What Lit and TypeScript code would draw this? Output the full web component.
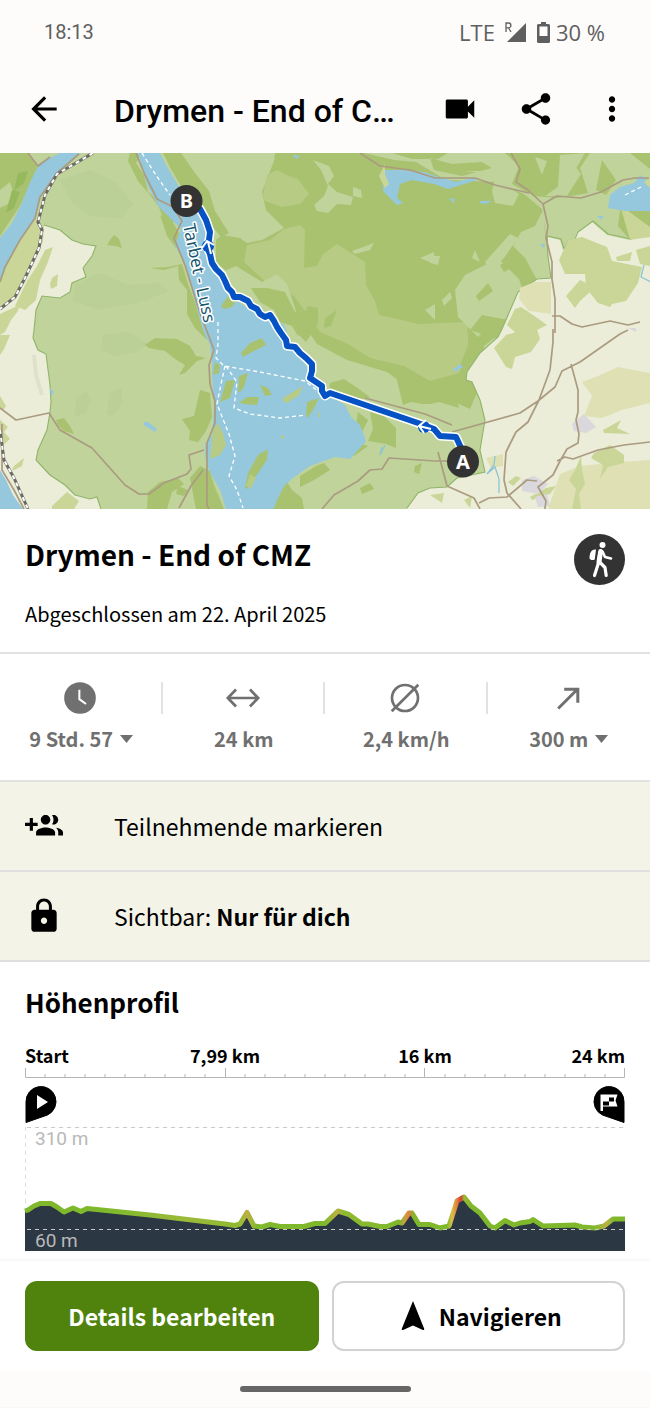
import { LitElement, html, css, svg } from "lit";
import { customElement, property } from "lit/decorators.js";

const icons: Record<string, unknown> = {
  back: svg`<path d="M20 11H7.83l5.59-5.59L12 4l-8 8 8 8 1.41-1.41L7.83 13H20z"/>`,
  video: svg`<path d="M17 10.5V7c0-.55-.45-1-1-1H4c-.55 0-1 .45-1 1v10c0 .55.45 1 1 1h12c.55 0 1-.45 1-1v-3.5l4 4v-11z"/>`,
  share: svg`<path d="M18 16.08c-.76 0-1.44.3-1.96.77L8.91 12.7c.05-.23.09-.46.09-.7s-.04-.47-.09-.7l7.05-4.11c.54.5 1.25.81 2.04.81 1.66 0 3-1.34 3-3s-1.34-3-3-3-3 1.34-3 3c0 .24.04.47.09.7L8.04 9.81C7.5 9.31 6.79 9 6 9c-1.66 0-3 1.34-3 3s1.34 3 3 3c.79 0 1.5-.31 2.04-.81l7.12 4.16c-.05.21-.08.43-.08.65 0 1.61 1.31 2.92 2.92 2.92s2.92-1.31 2.92-2.92-1.31-2.92-2.92-2.92z"/>`,
  more: svg`<path d="M12 8c1.1 0 2-.9 2-2s-.9-2-2-2-2 .9-2 2 .9 2 2 2zm0 2c-1.1 0-2 .9-2 2s.9 2 2 2 2-.9 2-2-.9-2-2-2zm0 6c-1.1 0-2 .9-2 2s.9 2 2 2 2-.9 2-2-.9-2-2-2z"/>`,
  groupAdd: svg`<path d="M8 10H5V7H3v3H0v2h3v3h2v-3h3v-2zm10 1c1.66 0 2.99-1.34 2.99-3S19.66 5 18 5c-.32 0-.63.05-.91.14.57.81.9 1.79.9 2.86s-.34 2.04-.9 2.86c.28.09.59.14.91.14zm-5 0c1.66 0 2.99-1.34 2.99-3S14.66 5 13 5c-1.66 0-3 1.34-3 3s1.34 3 3 3zm6.62 2.16c.83.73 1.38 1.66 1.38 2.84v2h3v-2c0-1.54-2.37-2.49-4.38-2.84zM13 13c-2 0-6 1-6 3v2h12v-2c0-2-4-3-6-3z"/>`,
  lock: svg`<path d="M18 8h-1V6c0-2.76-2.24-5-5-5S7 3.24 7 6v2H6c-1.1 0-2 .9-2 2v10c0 1.1.9 2 2 2h12c1.1 0 2-.9 2-2V10c0-1.1-.9-2-2-2zm-6 9c-1.1 0-2-.9-2-2s.9-2 2-2 2 .9 2 2-.9 2-2 2zm3.1-9H8.9V6c0-1.71 1.39-3.1 3.1-3.1 1.71 0 3.1 1.39 3.1 3.1v2z"/>`,
  clock: svg`<circle cx="12" cy="12" r="10"/><path d="M11.6 6.8v5.9l4.2 3.1" fill="none" stroke="#fff" stroke-width="1.3"/>`,
  distance: svg`<path d="M3 12h18M7.6 6.6 2.4 12l5.2 5.4M16.4 6.6 21.6 12l-5.2 5.4" fill="none" stroke="currentColor" stroke-width="1.7"/>`,
  average: svg`<circle cx="12" cy="12" r="8.2" fill="none" stroke="currentColor" stroke-width="1.7"/><path d="M3.6 20.4 20.4 3.6" stroke="currentColor" stroke-width="1.7"/>`,
  ascent: svg`<path d="M5.8 18.6 17.8 6.600M9.600 6.400h8.600v8.600" fill="none" stroke="currentColor" stroke-width="1.9"/>`,
  navigate: svg`<path d="M12 2 4.6 20.4c-.3.8.1 1.2.8.9L12 18.4l6.600 2.900c.7.3 1.100-.1.8-.9z"/>`,
};

const icon = (name: string, cls = "icon") =>
  html`<svg class=${cls} viewBox="0 0 24 24" fill="currentColor" aria-hidden="true">${icons[name]}</svg>`;

@customElement("status-bar")
class StatusBar extends LitElement {
  static styles = css`
    :host { display: flex; justify-content: space-between; align-items: center; height: 64px; padding: 0 45px 0 44px; color: #5f5f5f; font: 22px/28px "Open Sans", sans-serif; }
    .time { font: 20px/28px Roboto, sans-serif; }
    .right { display: flex; align-items: center; gap: 10px; }
    .signal { width: 22px; height: 22px; }
    .charge { display: flex; align-items: center; gap: 6px; }
    .battery { width: 13px; height: 21px; }
  `;
  render() {
    return html`
      <span class="time">18:13</span>
      <span class="right">
        <span>LTE</span>
        <svg class="signal" viewBox="0 0 22 22" fill="#5f5f5f">
          <path d="M21 2v19H2z"/>
          <path d="M1 11V2h2.500a2.300 2.300 0 0 1 0 4.800H1M3.600 7l2.400 4" fill="none" stroke="#5f5f5f" stroke-width="1.300"/>
        </svg>
        <span class="charge">
          <svg class="battery" viewBox="0 0 13 21" fill="#5f5f5f">
            <path fill-rule="evenodd" d="M4 0h5v2h2.500q1.500 0 1.500 1.500v16q0 1.500-1.500 1.500h-10Q0 21 0 19.500v-16Q0 2 1.500 2H4zM2.500 4.500V14h8V4.500z"/>
          </svg>
          <span>30 %</span>
        </span>
      </span>`;
  }
}

@customElement("app-bar")
class AppBar extends LitElement {
  @property() heading = "";
  static styles = css`
    :host { display: flex; align-items: center; height: 89px; padding: 0 19px 0 25px; box-sizing: border-box; }
    button { display: flex; padding: 0; border: 0; background: none; color: #000; }
    .icon { width: 38px; height: 38px; }
    h1 { flex: 1; min-width: 0; margin: 0 32px 0 51px; padding-top: 4px; overflow: hidden; text-overflow: ellipsis; white-space: nowrap; font: 500 32px/40px Roboto, sans-serif; }
    .actions { display: flex; gap: 38px; }
  `;
  render() {
    return html`
      <button aria-label="Zurück">${icon("back")}</button>
      <h1>${this.heading}</h1>
      <div class="actions">
        <button aria-label="Video">${icon("video")}</button>
        <button aria-label="Teilen">${icon("share")}</button>
        <button aria-label="Mehr">${icon("more")}</button>
      </div>`;
  }
}

const ROUTE =
  "M200 209L206 220 210 232 209 240 207 247 210 254 212 263 216 269 222 275 225 281 228 288 232 292 234 297 240 297 248 301 251 306 257 309 260 314 265 317 270 315 274 321 277 327 281 333 286 340 287 346 295 347 300 353 306 358 312 364 312 371 310 378 316 382 322 386 322 391 325 396 330 393 418 423 434 429 440 436 456 437 462 450";

@customElement("route-map")
class RouteMap extends LitElement {
  static styles = css`
    :host { display: block; }
    .map { display: block; width: 100%; }
    .road { fill: none; stroke: #ab9b80; stroke-width: 1.7; stroke-linejoin: round; }
    .rail { fill: none; stroke: #6b6b64; stroke-width: 3; }
    .ties { fill: none; stroke: #fff; stroke-width: 2; stroke-dasharray: 4 4; }
    .bound { fill: none; stroke: #8fb56a; stroke-width: 1.1; }
    .ferry { fill: none; stroke: #fff; stroke-width: 1.3; stroke-dasharray: 4 3; }
    .water { fill: #95c8dd; }
    .light { fill: #bfd39a; }
    .mid { fill: #a8c270; }
    .olive { fill: #b8cb85; }
    .khaki { fill: #c9d697; }
    .cream { fill: #ebedd8; }
    .tan { fill: #dfe1b5; }
    .town { fill: #dad8dc; }
    .pin { fill: #333; }
    .letter { font: 700 20px "Noto Sans", sans-serif; fill: #fff; text-anchor: middle; }
    .lake { font: 17px "Noto Sans", sans-serif; fill: #19566f; stroke: #fff; stroke-width: 3; paint-order: stroke; stroke-linejoin: round; }
    .halo { fill: none; stroke: #fff; stroke-width: 9; stroke-linejoin: round; stroke-linecap: round; }
    .route { fill: none; stroke: #0552c4; stroke-width: 6; stroke-linejoin: round; stroke-linecap: round; }
    .arrow { fill: none; stroke: #fff; stroke-width: 2; }
    .dot { fill: #0552c4; }
  `;
  render() {
    return html`
      <svg class="map" viewBox="0 153 650 356" role="img" aria-label="Karte der Tour">
        <rect class="light" x="0" y="153" width="650" height="356"/>
        <path fill="#bad096" d="M60 180l30-10 25 12 18 22-12 14-30-2-18-12zM75 285l25-12 28 12 30-2 10 8-30 12-40 6-25-8zM103 335l25-3 20 12-12 8-20 4-14-6zM76 398l10-6 5 8-6 14-10 2zM110 392l12-4 0 16-10 12-5-2z"/>

        <path class="mid" d="M0 153h28l10 13-3 9-7 14-8 17-20 30z"/>
        <path class="light" d="M28 153h24l-14 13zM0 190l10-8 3 10-5 12-8 4z"/>
        <path fill="#97b95d" d="M18 173l10-2-4 12-10 8zM12 190l8 2-6 16-8 5z"/>
        <path class="water" d="M60 153h20l-23 20-17 24-5 21-15 22-15 27-5 15v-44l12-15 10-20 6-16 7-15 5-9z"/>
        <path class="khaki" d="M35 219l7 9-1 17-16 33-10 19-15 12v-27l20-42z"/>
        <path class="cream" d="M44 225l16 5 12 10 11 4 13 2-4 10-9 12 3 9-14 6-2 9-10 6-18-2-6 14-2 20-1 8 5 12 8 4 4 31 1 17-1 10-3 18-9 20-2 10 14 15 15 10 10 10 15 4 7-2 4 12H0V309l18-16 16-30 9-22z"/>
        <path class="khaki" d="M45 250l8-3-5 15-8 18-4 20-11 10-10-4 12-25 10-15zM52 278l6-4-1 12-6 3-1-5zM0 314l15-7 5-4-2 8-7 9-6 12-5 3zM0 335h10l-6 14-4 6zM0 396l6 10-3 4-3-2zM0 420l8 7-4 5 6 7-8 7-2-10zM14 466l10-8-2 8-10 5zM52 506l15-14 12 9-5 8H52z"/>
        <path class="bound" d="M44 225l16 5 12 10 11 4 13 2-4 10-9 12 3 9-14 6-2 9-10 6-18-2-6 14-2 20-1 8 5 12 8 4 4 31 1 17-1 10-3 18-9 20-2 10 14 15 15 10 10 10 15 4 7-2 4 12"/>
        <path fill="none" stroke="#dfe2cb" stroke-width="4" d="M34 355l2 20 6 20"/>
        <path class="mid" d="M110 240l4-5 5 4 3 9-6-2-9-1zM56 420l8-2 6 8 4 8-10-3-6-6zM145 345l10-7 22 1 13 7 6 10 10 2-9 3-12 12-6 2 6-10-10-6-10-8-16-3zM200 390l10 3 2 24-6 14-8 11-9-2 1-9-8-12 12-3zM148 492l12-10 18-4 6 6-12 8-5 17h-20zM190 478l10-12 10 5 4 14 10 24h-28zM178 486l10 4-4 6-8-2z"/>

        <path class="mid" d="M275 153l-1 8-12 31 4 18 18 18-22 12-15 3-7-5-18-3-6 5v22l14 12 10 18 20 8 16 10 14 18 10 8 20 28 60 20 60 20 30 5 12-28 2-35 25-20 18-40 25-18 3-40-5-35-18-15-45-10-50-5-30-25z"/>
        <path class="mid" d="M130 153h12l-6 10 8 12 4 17 14 12 14 12-4 10 4 14-8-8-9-25-9-12-12-14-10-20zM163 153h18l14 20 14 18 6 20 14 22-8 4-16-20-12-14-8-10-14-24zM150 268l18-1 14-3 6 20 7 18 7 24 5 14-12-12-8-14 0-24-8-10-1-14-14 4zM160 215l14 9 10 18-8 6-9-12z"/>
        <path class="olive" d="M247 245l23-5 14-11 16-4 5 5-1 38 13-2 6-12 14-10 14 9 14 9 1 23 9 16 4 14 40 9 48-2 2 31-10 20-29 8-26-15-34-8-22-14-28-12-26-36-28-14-22-20zM277 170l14 7 7 2 11 15-9 10-18 3-17-6-2-6 4-20z"/>
        <path class="light" d="M222 272l14-6 26 16 15-8 10 10 10 30 20 30 30 16 40 12 30 22 25 2 30 14 12 10 2 14-2 36-20 6-20 8-35 14-18 11H268l14-29 23-15 25-10 15 2 16-15-18-30-13-12-18-16-10-18-18-20-20-18-25-20-12-20z"/>
        <path class="mid" d="M251 288l16 0 18 4 9 18 12 14-8 12-6-10-12-4-6-12-14-8zM300 320l8-14 10 2 0 16-12 18-8-8zM325 318l12-8-6 16-7 2zM395 372l16 8 22 4 22 10 4 14-20-6-8 2-8 0-12-2-8 3zM470 340l18-30 14-22 10-15 22-8 10 4-20 18-22 40-20 20-8 22 10 30-14-12-10-22zM330 383l14-4 12 8 14 10-12 3-14-6-15-2zM370 412l14 4 12 12 0 20-10-4-18-3 5-12zM358 412l10 8-6 12-6-8zM300 476l16-10 8-3 6 7-16 10-14 7zM278 485l8-5 6 10 10 8 2 11h-34zM360 488l10-5 4 6-12 5zM348 450l14-6 6 2-14 10zM415 466l7-3-3 11-5-2z"/>
        <path class="light" d="M313 160l16 6 5 10-6 8 9 8 16 5-2 8-14-1-9 9-11-2-3-6 10-9 4-10-7-16zM353 187l8 3 1 8-9-2zM352 251l22-8-4 7-15 4zM420 258l14-6v12zM425 310l10-6v16zM485 262l25-28 8 4-14 20-14 13zM430 256l10 0-2 9-8-2zM455 290l10-15 20-10 14-6 20 20 7 20-12 20-20 0-16 18-20-20zM475 250l5 12-8-4zM442 300l8-8 2 6-8 8z"/>
        <path class="mid" d="M476 296l12-13 5 8-14 10zM500 265l14-8 5 6-15 9zM470 330l12-15 30 6-14 18z"/>

        <path class="light" d="M364 153h286v85l-20 2-38-18-18 20-7 8-7-10-14-3-4-28-18-15-28-12-50-2-30-18-22-2z"/>
        <path class="light" d="M547 205l-3 20 4 32 3 22-14 1-12-22-12-12 8-14 14-6 6-12z"/>
        <path class="mid" d="M505 153h85l-10 15 8 25-30 5-24-2-22-12 7-18zM620 210h30v24l-20 6-12-14zM600 153h30l20 16v-16zM596 190l6-30 14 20-10 15zM430 158l22 6 30-2 10 6-30 8-28-6zM392 153l20 6 26 0 10-6z"/>
        <path class="light" d="M560 155l25-2-15 26-12 8zM535 157l12 4-5 14zM462 171l24 2v-2zM545 196l14-10 16-20 6 8-14 22zM495 178l24 16-6 12-18-3-3-12z"/>
        <path class="cream" d="M548 237l12 3 3 10 4-8 7-2 3-7 15-11 15 13 23 5 20-8v277H407l11-16 12-5 17-1 10-9 28-6-5-22 5-30-5-20-8-18-6-2 1-8 13-19 18-16 4-8 16-37 9-6 10-7 14-1-3-22z"/>
        <path class="bound" d="M407 508l11-15 12-5 17-1 10-9 28-6-5-22 5-30-5-20-8-18-6-2 1-8 13-19 18-16 4-8 16-37 9-6 10-7 14-1-3-22-1-20 14 3 3 10 4-8 7-2 3-7 15-11 15 13 23 5 20-8"/>
        <path class="khaki" d="M568 240l14-3 25 10 5 14 30 6-4 16-12 18-14 3-2 3-12-4-12-15-1-14-20 0-6-14 6-13zM566 296l14-16 8 4 1 9-9 8-5 7zM616 257l16-5-2 9-13 0zM636 250l14-4v20l-10-2zM494 348l12-13 30-9 4 13-9 13-16 5-3 12-6-2-10-16zM507 325l8-16 6-2 12 8 14 10-10 5-20 4zM620 205l30 22v10l-20 3z"/>
        <path class="tan" d="M520 288l14-6 17 0v32l-22-3-10-12zM582 382l16-6 20-9 32 6v30l-28 7-20 8-18-2 8-20zM560 474l20-8 40-4 30-2v49H548zM486 458l17-4v12l-12 2z"/>
        <path class="khaki" d="M603 430l18-10-4 8 13 6-26-1zM594 453l16-8 14 10 0 8-16 4-8 12 3-14-12-7zM575 470l6-14 1 14 3 14-6 10 2 15h-9l4-20-7-9zM530 497l16-9 10-2-6 8-18 6zM508 482l8-6 5 2-8 8zM464 500l8-4-2 12zM430 495l14-2-2 10z"/>
        <path class="town" d="M572 424l12-10 12 13-10 6-12-2zM522 480l12-4 14 8-10 10-16-3zM535 497l12-3 3 12-12 1zM628 328h8v4z"/>

        <path class="water" d="M138 153h22l6 12 12 20 22 27 8 25 0 14 7 22 13 17 9 11 10 7 13 4 15 10 9 2 5 16 12 17 12 20 8 14 14 8 10 6 6 12 9 8 6 16-6 7-10 11-15-2-25 9-17 12-9 8-7 14-4 10h-47l-5-18-12-22-4-14 0-12 7-9 2-30-2-30 0-12-2-18-6-12-9-32-11-38-9-18 6-16-22-22-12-22z"/>
        <path class="water" d="M384 170h16l24 2 12 4 20 6 16-4 8 1-16 5-16 5-14-5-22-4-12 4-3 14 6 5-6 2-14-14zM610 195l10-8 14-4 6-8 10 6v30l-25 0-17-3zM480 201l12 0-6 3-6-1zM449 198l6 1-2 4zM540 244l5 0-1 4zM597 216l6 0-1 4zM292 155l8 1-3 3zM144 422l4 0 9 7-2 3-11-7zM50 388l4 4-3 4zM0 470l6 10 7 15 10 14H0zM453 369l8-5 2 3-9 5z"/>
        <path class="khaki" d="M385 164l-6 12 6 12 4-4-4-10zM644 182l6-4v10z"/>
        <path class="mid" d="M241 353l9-10 12-5 4 7-14 7-9 5zM220 402l6-21 9-1-5 18zM238 392l1-16 9-3-4 14-4 5zM239 403l8-6 12 0-2 8-12-1zM260 385l8 3 4 7-7 1zM306 416l1-14 12-4-6 12-6 8zM245 488l3-15 10-18 10-6-1 11-13 19-7 10zM215 362l5 3-1 8-6 2zM221 306l8-11 7 6-4 6-8 2zM207 490l8 0 4 16h-6z"/>
        <path class="olive" d="M283 398l20-12-4 9-12 8-4-2zM246 486l4-12 6 4-5 10zM213 430l5-7 5 10 3 12-6 10-10 4zM280 437l4-2 0 4zM318 410l2 6-2 2z"/>
        <path class="water" d="M218 458l4-4 2 30-6 0z"/>
        <path fill="none" stroke="#8ec5d6" stroke-width="1.300" d="M495 456l-1 9-7 9 8-7 4 12 0 14M644 265l-3 12 10 5M385 445l-5 10 2-8"/>

        <path class="road" d="M28 153l10 13 12-9M79 154l-22 19-17 24-5 21-15 22-15 27-5 15M136 153l9 22 12 24 16 8 9 14-8 17 11 27 14 45 15 40-5 15 1 19 5 17v22l-8 20v62l10 21M0 408l16 12 33-7 11 17 32 18 33 37 14 9 10 0 15-11 23-9 4-5-2-14 15-5M203 470l-12 16-12 22M2 424v46l12 20 10 19M322 509l12-14 24-14 12-11 12-1 7-11 46 3 14 0M365 398l60 16 27 11M452 432l68-19 18-12 17-14 7-16 18-9 40-28 8-4M553 329v13l-3 28-11 30-11 22-12 10-10 20-2 28 3 13 14 16M571 364l7 26 0 22 -2 8 3 14-1 9-11 6-7 12-7 14-15 12 8 14-2 14M557 461l8-4 8 2 25-9 26-5 26-3M479 503l10-5 18-1 20-17 10 1M438 452l9 34 27 12 6 11M511 153l9 16-4 13 12 8 15 14 14-8 24 2 20-6 22-12 12-2 14 0M543 204l5 22-2 12 6 24 0 17 3 20v34M552 316h8l12 8 10 3 28-6 18 4 12-3M360 153l20 13 30 4 25 8 40 0 20 7 34 8"/>
        <path class="rail" d="M93 153l-36 21-12 21-7 27 4 8-3 18-14 30-10 19-15 12M0 430l4 30 10 18 14 31"/>
        <path class="ties" d="M93 153l-36 21-12 21-7 27 4 8-3 18-14 30-10 19-15 12M0 430l4 30 10 18 14 31"/>
        <path class="ferry" d="M142 153l10 16 8 12 10 14M218 322l0 22-2 14 8 8 36 6 45 9 18 14M225 366l-4 18-4 20 12 30 6 22-6 20 8 14 6 18M226 366l11 16-3 26 16 6 30 4 26-3M625 195l16-8"/>

        <defs><path id="lakeline" d="M183 225Q192 270 205 328"/></defs>
        <text class="lake"><textPath href="#lakeline">Tarbet - Luss</textPath></text>

        <path class="halo" d=${ROUTE}/>
        <path class="route" d=${ROUTE}/>
        <circle class="dot" cx="208" cy="246" r="6"/>
        <path class="arrow" d="M211 254l-3-12M202 248l5-7 7 4"/>
        <circle class="dot" cx="424" cy="427" r="6"/>
        <path class="arrow" d="M431 429l-12-3M426 420l-7 6 5 7"/>
        <circle class="pin" cx="186.500" cy="201" r="16"/>
        <circle class="pin" cx="463" cy="461.500" r="16"/>
        <text class="letter" x="186.500" y="208">B</text>
        <text class="letter" x="463" y="469">A</text>
      </svg>`;
  }
}

const PROFILE =
  "25 1211 28 1210 34 1206 40 1203.500 51 1203.500 57 1207 64 1212 73 1208 81 1211.500 87 1208.500 150 1215 225 1224 235 1225.500 240 1224 247 1212.500 254 1226 262 1227 270 1224.500 280 1226.500 304 1226.500 315 1223.500 325 1223.500 338 1211 349 1214.500 362 1224 368 1224 380 1226.500 387 1226.500 398 1222 402 1223 409 1213 412 1213 419 1224.500 430 1224.500 440 1228 449 1226 457 1201 464 1197 471 1206 480 1213 490 1226 495 1228 505 1220.500 514 1225 520 1223 530 1221.500 533 1219.500 543 1226 575 1225 582 1227 595 1228 604 1226 613 1219 625 1219";

@customElement("elevation-profile")
class ElevationProfile extends LitElement {
  static styles = css`
    :host { display: block; padding: 0 25px; }
    .chart { display: block; width: 100%; overflow: visible; }
    .km { font: 700 18px "Noto Sans CJK SC", sans-serif; fill: #000; }
    .middle { text-anchor: middle; }
    .end { text-anchor: end; }
    .axis { stroke: #b5b5b5; stroke-width: 1; fill: none; }
    .grid { stroke: #c9c9c9; stroke-width: 1; stroke-dasharray: 4 4; fill: none; }
    .upright { stroke: #ddd; }
    .area { fill: #2c3744; }
    .meters { font: 19px Roboto, sans-serif; fill: #b9b9b9; }
    .line { fill: none; stroke: url(#slope); stroke-width: 5; stroke-linejoin: round; }
  `;
  render() {
    const minor = Array.from({ length: 31 }, (_, i) => i).filter((i) => i % 10);
    const slope: [number, string][] = [
      [0, "#7fb92b"], [80, "#7fb92b"], [160, "#9bba39"], [212, "#8fba30"], [217, "#9bb936"], [222, "#c4ac44"], [227, "#9bb936"], [232, "#7fb92b"],
      [300, "#7fb92b"], [312, "#bdb043"], [318, "#8fba30"], [374, "#7fb92b"], [380, "#c9a040"], [384, "#e2813d"], [389, "#7fb92b"],
      [422, "#7fb92b"], [427, "#d9c04a"], [432, "#e0803c"], [436, "#cf3d35"], [439, "#9bb936"], [446, "#7fb92b"], [570, "#7fb92b"], [582, "#bdb043"], [588, "#7fb92b"], [600, "#7fb92b"],
    ];
    return html`
      <svg class="chart" viewBox="25 1040 600 211" role="img" aria-label="Höhenprofil">
        <defs>
          <linearGradient id="slope" gradientUnits="userSpaceOnUse" x1="25" x2="625" y1="0" y2="0">
            ${slope.map(([at, color]) => svg`<stop offset=${at / 600} stop-color=${color} />`)}
          </linearGradient>
        </defs>
        <text class="km" x="25" y="1063">Start</text>
        <text class="km middle" x="225" y="1063">7,99 km</text>
        <text class="km middle" x="425" y="1063">16 km</text>
        <text class="km end" x="625" y="1063">24 km</text>
        <path class="axis" d="M25.500 1068v9.500h599V1068M225.500 1068v9M424.500 1068v9"/>
        ${minor.map((i) => svg`<path class="axis" d=${`M${25 + i * 20} 1074v3`} />`)}
        <path d="M26 1122.500V1102a15 15 0 1 1 21.500 13z" stroke="#000" stroke-linejoin="round"/>
        <path d="M37 1095v14l11-7z" fill="#fff"/>
        <path d="M624 1122.500V1102a15 15 0 1 0-21.500 13z" stroke="#000" stroke-linejoin="round"/>
        <path d="M600.500 1094.500h17l-2 6 2 6h-14.500v4.500h-2.500z" fill="#fff"/>
        <path d="M603 1101.500h6v4h-6zM609 1097.500h5v4h-5z"/>
        <path class="grid" d="M27 1127.500h597"/>
        <path class="grid upright" d="M25.500 1127v80"/>
        <text class="meters" x="35" y="1145">310 m</text>
        <path class="area" d=${`M${PROFILE} 625 1251 25 1251z`}/>
        <polyline class="line" points=${PROFILE}/>
        <path class="grid" d="M27 1229.500h597"/>
        <text class="meters" x="35" y="1247">60 m</text>
      </svg>`;
  }
}

@customElement("app-root")
class AppRoot extends LitElement {
  static styles = css`
    :host { display: flex; flex-direction: column; min-height: 100vh; background: #fff; color: #000; font-family: "Noto Sans CJK SC", "Noto Sans", sans-serif; }
    .top, .bottom { background: #fdfcfb; }
    button { font: inherit; color: inherit; }
    .summary { display: flex; justify-content: space-between; align-items: flex-start; padding: 25px 25px 24px; border-bottom: 2px solid #e2e2e2; }
    .name { margin: 0; font-size: 28px; line-height: 40px; font-weight: 700; }
    .done { margin: 26px 0 0; font-size: 20px; line-height: 28px; }
    .sport { width: 51px; height: 51px; }
    .stats { display: grid; grid-template-columns: repeat(4, 1fr); padding: 28px 0 25px; color: #707070; border-bottom: 2px solid #e2e2e2; }
    .stat { display: flex; flex-direction: column; align-items: center; gap: 9px; }
    .figure { display: flex; justify-content: center; align-items: center; width: 100%; height: 32px; border-right: 2px solid #e2e2e2; box-sizing: border-box; }
    .stat:last-child .figure { border-color: transparent; }
    .stat-icon { width: 38px; height: 38px; }
    .value { display: flex; align-items: center; gap: 7px; padding: 0; border: 0; background: none; font-size: 20px; line-height: 32px; font-weight: 700; }
    .caret { width: 13px; height: 8px; }
    .row { display: flex; align-items: center; width: 100%; height: 90px; padding: 0 25px; gap: 51px; border: 0; border-bottom: 2px solid #e0e0de; background: #f3f3e7; box-sizing: border-box; text-align: left; font-size: 23px; line-height: 36px; }
    .icon { width: 38px; height: 38px; }
    .section { margin: 20px 25px 18px; font-size: 26px; line-height: 40px; font-weight: 700; }
    .bottom { margin-top: 10px; box-shadow: 0 0 5px rgba(0, 0, 0, 0.08); }
    .actions { display: grid; grid-template-columns: 1fr 1fr; gap: 13px; padding: 20px 25px; background: #fff; }
    .action { display: flex; justify-content: center; align-items: center; gap: 8px; height: 70px; padding: 0; border: 2px solid #d2d2d2; border-radius: 12px; background: #fff; font-size: 23px; font-weight: 700; box-sizing: border-box; }
    .primary { border-color: #4f830d; background: #4f830d; color: #fff; }
    .nav-icon { width: 36px; height: 36px; }
    .handle { width: 171px; height: 6px; margin: 15px auto; border-radius: 3px; background: #666; }
  `;
  render() {
    const caret = html`<svg class="caret" viewBox="0 0 13 8" fill="currentColor"><path d="M0 0h13L6.500 8z"/></svg>`;
    return html`
      <header class="top">
        <status-bar></status-bar>
        <app-bar heading="Drymen - End of CMZ"></app-bar>
      </header>
      <route-map></route-map>
      <section class="summary">
        <div>
          <h2 class="name">Drymen - End of CMZ</h2>
          <p class="done">Abgeschlossen am 22. April 2025</p>
        </div>
        <svg class="sport" viewBox="0 0 51 51" role="img" aria-label="Wandern">
          <circle cx="25.500" cy="25.500" r="25.500" fill="#333"/>
          <g fill="none" stroke="#fff" stroke-linecap="round" stroke-linejoin="round">
            <circle cx="28.500" cy="11" r="3" fill="#fff" stroke="none"/>
            <path d="M22 15.500c-5-.5-6.500 4-6.500 9 1.500 2 3.500 1.800 5.300 1z" fill="#fff" stroke="none"/>
            <path d="M26.500 17.500 25 28" stroke-width="5"/>
            <path d="M28.500 17.500l2.500 5.500 6 1.500" stroke-width="2.600"/>
            <path d="M24.500 29 20.500 41.500M26 28.500l5 5 1.200 8" stroke-width="3.200"/>
            <path d="M24 16l-3 11" stroke="#333" stroke-width="1"/>
          </g>
        </svg>
      </section>
      <section class="stats">
        <div class="stat"><span class="figure">${icon("clock", "stat-icon")}</span><button class="value">9 Std. 57 ${caret}</button></div>
        <div class="stat"><span class="figure">${icon("distance", "stat-icon")}</span><span class="value">24 km</span></div>
        <div class="stat"><span class="figure">${icon("average", "stat-icon")}</span><span class="value">2,4 km/h</span></div>
        <div class="stat"><span class="figure">${icon("ascent", "stat-icon")}</span><button class="value">300 m ${caret}</button></div>
      </section>
      <button class="row">${icon("groupAdd")}<span>Teilnehmende markieren</span></button>
      <button class="row">${icon("lock")}<span>Sichtbar: <b>Nur für dich</b></span></button>
      <h3 class="section">Höhenprofil</h3>
      <elevation-profile></elevation-profile>
      <footer class="bottom">
        <div class="actions">
          <button class="action primary">Details bearbeiten</button>
          <button class="action">${icon("navigate", "nav-icon")}Navigieren</button>
        </div>
        <div class="handle"></div>
      </footer>`;
  }
}
